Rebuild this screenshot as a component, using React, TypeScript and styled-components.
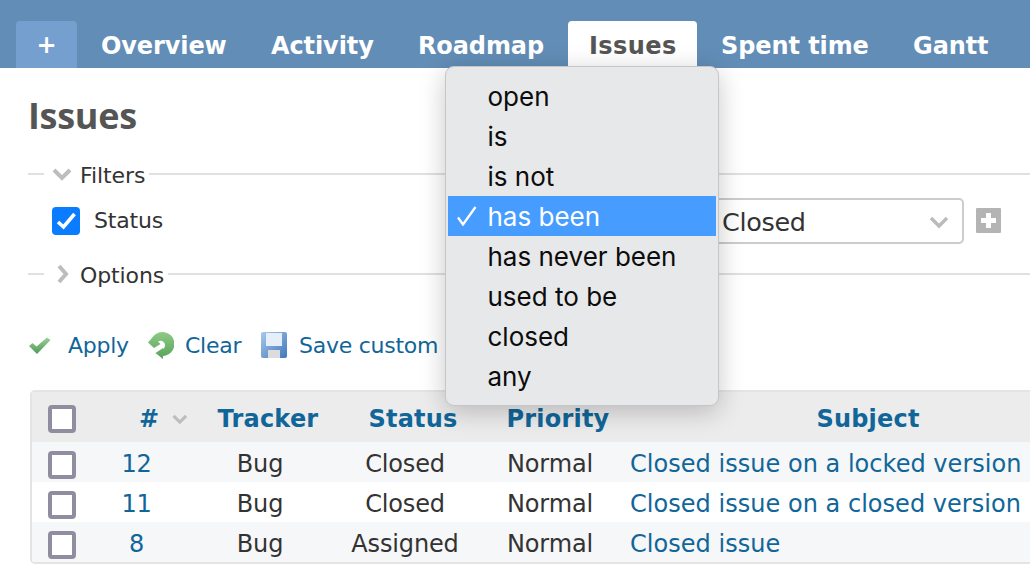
import React from "react";
import styled, { createGlobalStyle } from "styled-components";

const Global = createGlobalStyle`
  html, body { margin: 0; padding: 0; background: #fff; }
  body { width: 1030px; height: 588px; overflow: hidden; font-family: "DejaVu Sans", Verdana, sans-serif; color: #333; }
  * { box-sizing: border-box; }
`;
const Page = styled.div`position: relative; width: 1030px; height: 588px; overflow: hidden;`;
const Nav = styled.nav`display: flex; align-items: flex-end; gap: 4.3px; height: 68px; padding-left: 16px; background: #628db6;`;
const Tab = styled.a<{ $active?: boolean; $add?: boolean }>`
  display: flex; align-items: center; justify-content: center;
  height: 47px; padding: 2px 20px 0;
  ${p => p.$add && "width: 61px; padding: 0; margin-right: -0.3px;"}
  ${p => p.$active && "margin-left: -0.4px; padding-left: 21px;"}
  border-radius: 4px 4px 0 0;
  font-size: 24px; font-weight: 700; letter-spacing: ${p => (p.$active ? "0.45px" : "-0.1px")};
  color: ${p => (p.$active ? "#555" : "#fff")};
  background: ${p => (p.$active ? "#fff" : p.$add ? "#759fcf" : "transparent")};
`;
const Main = styled.main`padding: 28px 0 0 28px;`;
const Title = styled.h2`margin: 0; font: 700 36px/40px "Open Sans", sans-serif; color: #555; letter-spacing: -0.3px;`;
const Legend = styled.div<{ $top: number }>`
  display: flex; align-items: center; margin-top: ${p => p.$top}px; height: 28px; font-size: 22px; letter-spacing: -0.1px; color: #333;
  &::before { content: ""; width: 16px; height: 2px; background: #e0e0e0; margin-right: 8px; }
  &::after { content: ""; flex: 1; height: 2px; background: #e0e0e0; margin-left: 4px; }
`;
const LegendLabel = styled.span`padding-top: 3px;`;
const LegendIcon = styled.svg`width: 20px; height: 20px; margin-right: 8px; flex: none; filter: blur(0.4px);`;
const FilterRow = styled.div`display: flex; align-items: center; height: 46px; margin-top: 10px; padding-left: 24px;`;
const BlueCheck = styled.span`display: flex; align-items: center; justify-content: center; width: 28px; height: 28px; border-radius: 4px; background: #0a7cff;`;
const FilterName = styled.span`width: 622px; margin: -2px 0 0 14px; font-size: 22px; letter-spacing: -0.2px;`;
const ValueSelect = styled.div`
  display: flex; align-items: center; justify-content: space-between; width: 248px; height: 46px; padding: 2px 13px 0 6px;
  border: 2px solid #ccc; border-left: 0; border-radius: 0 5px 5px 0; font-size: 25.5px; letter-spacing: -0.35px;
`;
const AddIcon = styled.svg`width: 25px; height: 25px; margin-left: 12px; margin-top: -1px;`;
const Actions = styled.div`display: flex; align-items: center; height: 40px; margin-top: 37px; font-size: 22px; letter-spacing: -0.25px; color: #169;`;
const Action = styled.a<{ $w: number; $gap: number }>`display: flex; align-items: center; width: ${p => p.$w}px; svg { margin-right: ${p => p.$gap}px; flex: none; filter: blur(0.4px); }`;
const Table = styled.div`width: 1100px; margin: 25px 0 0 2px; border: 2px solid #e4e4e4; border-radius: 5px; overflow: hidden;`;
const Row = styled.div<{ $bg: string; $h: number }>`
  display: grid; grid-template-columns: 54px 102px 144px 146px 144px 476px; align-items: center; height: ${p => p.$h}px; background: ${p => p.$bg};
`;
const Box = styled.span<{ $body?: boolean }>`display: block; width: 28px; height: 28px; margin: ${p => (p.$body ? "6px" : "4px")} 0 0 16px; border: 4px solid #8f8d9f; border-radius: 4px; background: #fff;`;
const Head = styled.a<{ $start?: boolean }>`
  display: flex; align-items: center; justify-content: ${p => (p.$start ? "flex-start" : "center")};
  padding: 3px 0 0 ${p => (p.$start ? 53 : 16)}px; font-size: 24px; font-weight: 700; letter-spacing: 0.2px; color: #169;
`;
const HeadIcon = styled.svg`width: 24px; height: 24px; margin-left: 13px; filter: blur(0.4px);`;
const Cell = styled.span`padding-top: 4px; text-align: center; font-size: 24px; letter-spacing: -0.15px; color: #333;`;
const IdCell = styled.a`padding-top: 4px; padding-right: 1px; text-align: center; font-size: 24px; letter-spacing: -0.3px; color: #169;`;
const Subject = styled.a`padding: 4px 0 0 8px; font-size: 24px; letter-spacing: 0.03px; color: #169; white-space: nowrap;`;
const Menu = styled.ul`
  position: absolute; left: 445px; top: 66px; width: 274px; height: 340px; margin: 0; padding: 9px 2px 0; list-style: none;
  border: 1px solid #c6c6c8; border-radius: 9px; background: #e7e8ea; box-shadow: 0 6px 26px rgba(0,0,0,.22);
  font: 26px/42px Inter, "Liberation Sans", sans-serif; color: #0c0c0c;
`;
const MenuItem = styled.li<{ $on?: boolean }>`
  position: relative; height: 40px; padding-left: 39.5px;
  background: ${p => (p.$on ? "#479dff" : "transparent")}; color: ${p => (p.$on ? "#fff" : "#0c0c0c")};
`;
const Tick = styled.svg`position: absolute; left: 9px; top: 10px; width: 20px; height: 20px;`;

const Chevron = ({ right, as: C = LegendIcon }: { right?: boolean; as?: typeof LegendIcon }) => (
  <C viewBox="0 0 20 20">
    <path d={right ? "M7 2l7 8-7 8" : "M2 6l8 8 8-8"} fill="none" stroke="#bdbdbd" strokeWidth="4" />
  </C>
);
const rows = [
  { id: "12", status: "Closed", subject: "Closed issue on a locked version", bg: "#f6f7f8" },
  { id: "11", status: "Closed", subject: "Closed issue on a closed version", bg: "#fff" },
  { id: "8", status: "Assigned", subject: "Closed issue", bg: "#f6f7f8" },
];
const options = ["open", "is", "is not", "has been", "has never been", "used to be", "closed", "any"];

export default function App() {
  return (
    <Page>
      <Global />
      <Nav>
        <Tab $add>+</Tab>
        <Tab>Overview</Tab>
        <Tab>Activity</Tab>
        <Tab>Roadmap</Tab>
        <Tab $active>Issues</Tab>
        <Tab>Spent time</Tab>
        <Tab>Gantt</Tab>
      </Nav>
      <Main>
        <Title>Issues</Title>
        <Legend $top={24}><Chevron /><LegendLabel>Filters</LegendLabel></Legend>
        <FilterRow>
          <BlueCheck>
            <svg width="22" height="22" viewBox="0 0 22 22"><path d="M3 12l5.5 5L19.5 4" fill="none" stroke="#fff" strokeWidth="3.6" /></svg>
          </BlueCheck>
          <FilterName>Status</FilterName>
          <ValueSelect>
            Closed
            <svg width="20" height="14" viewBox="0 0 20 14"><path d="M2 3l8 8 8-8" fill="none" stroke="#bbb" strokeWidth="3.4" /></svg>
          </ValueSelect>
          <AddIcon viewBox="0 0 25 25"><rect width="25" height="25" rx="1" fill="#b4b4b4" /><path d="M12.5 5v15M5 12.5h15" stroke="#fff" strokeWidth="5" /></AddIcon>
        </FilterRow>
        <Legend $top={16}><Chevron right /><LegendLabel>Options</LegendLabel></Legend>
        <Actions>
          <Action $w={120} $gap={17}>
            <svg width="23" height="20" viewBox="0 0 23 20">
              <defs><linearGradient id="ok" x1="0" y1="0" x2="0" y2="1"><stop offset="0" stopColor="#9ad09a" /><stop offset="1" stopColor="#4f9a55" /></linearGradient></defs>
              <path d="M1 11l3.5-3 4 3.5L19 2.5l3.5 2.5L9 19z" fill="url(#ok)" />
            </svg>
            Apply
          </Action>
          <Action $w={113} $gap={11}>
            <svg width="26" height="28" viewBox="0 0 26 28">
              <defs><linearGradient id="cl" x1="0" y1="0" x2="0" y2="1"><stop offset="0" stopColor="#8fca85" /><stop offset="1" stopColor="#57a35a" /></linearGradient></defs>
              <path d="M0 11.5 L6 4.5 A12 12 0 1 1 15 25 L15 28 L7.5 22 L15 17 L15 18 A4.5 4.5 0 1 0 10 10.5 L12.5 13 L6 17 Z" fill="url(#cl)" />
            </svg>
            Clear
          </Action>
          <Action $w={200} $gap={12}>
            <svg width="26" height="26" viewBox="0 0 26 26">
              <defs><linearGradient id="sv" x1="0" y1="0" x2="1" y2="1"><stop offset="0" stopColor="#a9c8ea" /><stop offset="1" stopColor="#3f78bd" /></linearGradient></defs>
              <rect width="26" height="26" rx="2" fill="url(#sv)" />
              <rect x="5" y="1" width="16" height="13" fill="#e6eff9" />
              <rect x="7" y="18" width="12" height="8" fill="#dcdcdc" />
            </svg>
            Save custom
          </Action>
        </Actions>
        <Table>
          <Row $bg="#ececec" $h={50}>
            <Box />
            <Head $start>#<Chevron as={HeadIcon} /></Head>
            <Head>Tracker</Head>
            <Head>Status</Head>
            <Head>Priority</Head>
            <Head>Subject</Head>
          </Row>
          {rows.map(r => (
            <Row key={r.id} $bg={r.bg} $h={40}>
              <Box $body />
              <IdCell>{r.id}</IdCell>
              <Cell>Bug</Cell>
              <Cell>{r.status}</Cell>
              <Cell>Normal</Cell>
              <Subject>{r.subject}</Subject>
            </Row>
          ))}
        </Table>
      </Main>
      <Menu>
        {options.map(o => (
          <MenuItem key={o} $on={o === "has been"}>
            {o === "has been" && <Tick viewBox="0 0 20 20"><path d="M1 11.5l5 7L18.5 1" fill="none" stroke="#fff" strokeWidth="2.3" /></Tick>}
            {o}
          </MenuItem>
        ))}
      </Menu>
    </Page>
  );
}
